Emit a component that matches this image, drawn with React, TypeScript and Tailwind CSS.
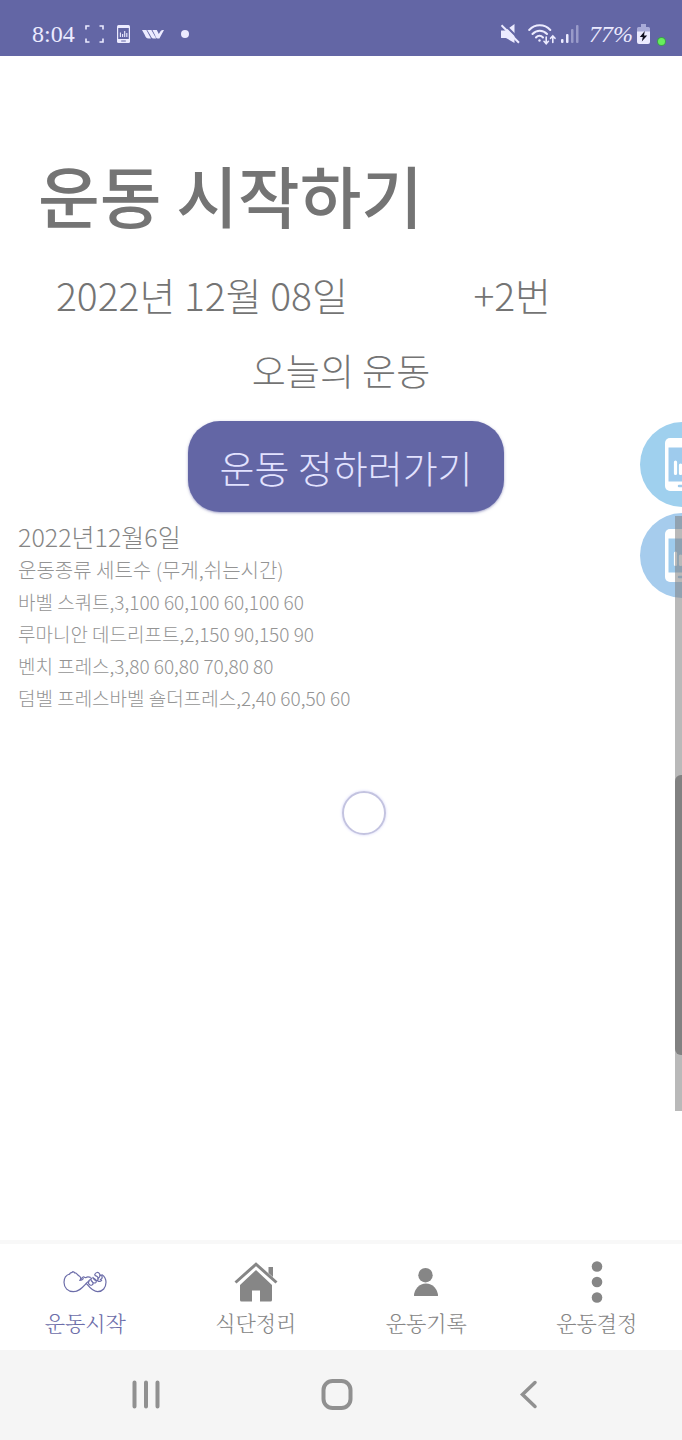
import type { ReactNode } from 'react';

const HAND = "font-['Noto_Sans_CJK_KR',sans-serif]";
const SERIF = "font-['Liberation_Serif','Noto_Serif_CJK_KR','Noto_Sans_CJK_KR',serif]";

function StatusBar() {
  return (
    <header className={`flex h-14 items-center justify-between bg-[#6366a5] pl-8 pr-[17px] pt-3 text-[#ecebff] ${SERIF}`}>
      <div className="flex items-center">
        <span className="text-2xl leading-8">8:04</span>
        <svg className="ml-2.5 h-[18px] w-[19px]" viewBox="0 0 19 18" fill="none" stroke="currentColor" strokeWidth="1.6" aria-hidden="true">
          <path d="M4.5 1H1v3.5M14.5 1H18v3.5M4.5 17H1v-3.5M14.5 17H18v-3.5" />
        </svg>
        <svg className="ml-[13px] h-[18px] w-[13px]" viewBox="0 0 13 18" aria-hidden="true">
          <rect width="13" height="18" rx="1.5" fill="currentColor" />
          <path d="M1.2 3h10.6v11H1.2z" fill="#6366a5" />
          <path d="M3.4 7.5V12M5.6 9V12M7.7 6V12M9.8 8V12" stroke="currentColor" strokeWidth="1.1" />
          <path d="M4.2 16h4.6" stroke="#6366a5" strokeWidth="1" />
        </svg>
        <svg className="ml-3 h-[9px] w-[22px]" viewBox="0 0 22 9" fill="currentColor" aria-hidden="true">
          <path d="M0 0h4.400l4.600 8.600H6.600C4.200 8.600 3.700 7 2.800 5zM5.200 0h4.200l4.800 8.600h-2.800c-1.600 0-2.200-1.600-3.200-3.600zM10.400 0h4.400l2 4 1.700-2.700C19.100.300 20 0 22 0l-4.600 8.600h-1.800c-1.400 0-1.800-1.600-2.600-3.600z" />
        </svg>
        <span className="ml-[17px] size-2 rounded-full bg-current" />
      </div>
      <div className="flex items-center">
        <svg className="size-5" viewBox="0 0 20 20" aria-hidden="true">
          <path d="M1 6.500h4.500L14.500 0v19L6 14H1z" fill="currentColor" />
          <path d="M3.500-.500 20.500 16.500" stroke="#6366a5" strokeWidth="2" />
          <path d="M1.500 1.200 19 18.800" stroke="currentColor" strokeWidth="2" />
        </svg>
        <svg className="ml-2 h-[21px] w-7" viewBox="0 0 28 21" fill="none" stroke="currentColor" strokeWidth="2" strokeLinecap="round" aria-hidden="true">
          <path d="M1.200 6C7-.300 16.500-.300 22.300 6M4.500 10c4-4.300 10.500-4.300 14.500 0M8 13.500c2-2.300 5-2.300 7 0" />
          <circle cx="11.500" cy="16.500" r="1.200" fill="currentColor" stroke="none" />
          <path d="M18.200 13v6.500m-2.200-2.200 2.200 2.400 2.200-2.400M24.800 18.500V12m-2.200 2.300 2.200-2.400 2.200 2.400" strokeWidth="1.600" />
        </svg>
        <svg className="ml-[5px] h-[18px] w-[18px]" viewBox="0 0 18 18" fill="currentColor" aria-hidden="true">
          <rect y="14" width="2.500" height="4" rx="1" />
          <rect x="5" y="9" width="2.500" height="9" rx="1" />
          <rect x="10" y="4" width="2.500" height="14" rx="1" opacity=".4" />
          <rect x="15" y="0" width="2.500" height="18" rx="1" opacity=".4" />
        </svg>
        <span className="ml-2.5 text-2xl leading-8 italic">77%</span>
        <svg className="ml-1 h-5 w-[13px]" viewBox="0 0 13 20" aria-hidden="true">
          <path d="M4 0h5v3h2.500q1.500 0 1.500 1.500V8H0V4.500Q0 3 1.500 3H4z" fill="#a9abd8" />
          <path d="M0 7.500h13V18q0 2-2 2H2q-2 0-2-2z" fill="currentColor" />
          <path d="M7.800 7 2.800 13h3L4.800 17.500l5.400-6H7z" fill="#111120" />
        </svg>
        <span className="mt-3.5 ml-2 size-[7px] rounded-full bg-[#67ee5d] ring-1 ring-[#3ba24b]" />
      </div>
    </header>
  );
}

const routine = [
  '바벨 스쿼트,3,100 60,100 60,100 60',
  '루마니안 데드리프트,2,150 90,150 90',
  '벤치 프레스,3,80 60,80 70,80 80',
  '덤벨 프레스바벨 숄더프레스,2,40 60,50 60',
];

function Bubble({ color, label }: { color: string; label: string }) {
  return (
    <button type="button" aria-label={label} className={`flex h-[85px] w-[85px] items-center justify-center rounded-full ${color}`}>
      <svg className="h-[53px] w-9" viewBox="0 0 36 53" aria-hidden="true">
        <rect width="36" height="53" rx="5" fill="white" />
        <path d="M3.500 9.500h29v34h-29z" fill="#9ecbed" />
        <path d="M10.500 24v11.500M15.500 27v8.500M20.500 21v14.500M25.500 25v10.500" stroke="white" strokeWidth="3.200" strokeLinecap="round" />
        <path d="M14 48h8" stroke="#9ecbed" strokeWidth="2.500" strokeLinecap="round" />
      </svg>
    </button>
  );
}

function ArmsIcon() {
  return (
    <svg className="h-[22px] w-11" viewBox="0 0 132 66" fill="none" stroke="currentColor" strokeWidth="3.600" strokeLinejoin="round" strokeLinecap="round" aria-hidden="true">
      <path d="M20 9C9 12 3 22 3 34c0 17 12 28 28 28 21 0 31-18 45-31 4-4 7-8 11-10" />
      <path d="M20 9c3-6 8-2 9-7 3 0 5 1 6 4 6-1 7 4 11 7 3 3 7 2 7 9 3 1 5-1 7-4 5-1 4 3 9 2 4-4 8-2 13-1" />
      <path d="M54 22c-3 3-1 5-4 6 4 0 8-1 11-5M70 37c10 12 18 25 34 25 15 0 25-12 25-28 0-10-4-18-12-23" />
      <path d="M78 31c-5 5 2 14 9 11 6-3 3-9-3-14M84 25c-1 8 10 14 15 9 3-5-2-10-8-13M90 19c0 8 11 13 15 7 3-6-2-10-8-12M95 12c2-9 11-10 15-3 3 6-1 11-6 13M110 13c8-3 11 9 2 13M104 29c4 3 9 2 12-1" />
    </svg>
  );
}

function HouseIcon() {
  return (
    <svg className="h-10 w-11" viewBox="0 0 44 40" aria-hidden="true">
      <path d="M34.500 5H39v10l-4.500-4z" fill="currentColor" />
      <path d="M1.500 20.500 22 2.200l20.500 18.300" fill="none" stroke="currentColor" strokeWidth="3" />
      <path d="M22 8 38 23v15q0 1.500-1.500 1.500H26v-11h-8v11H7.500Q6 39.500 6 38V23z" fill="currentColor" />
    </svg>
  );
}

function PersonIcon() {
  return (
    <svg className="h-7 w-6" viewBox="0 0 24 28" fill="currentColor" aria-hidden="true">
      <circle cx="11.500" cy="7.200" r="7.200" />
      <path d="M0 28a12 12.500 0 0 1 24 0z" />
    </svg>
  );
}

function DotsIcon() {
  return (
    <svg className="h-[42px] w-3" viewBox="0 0 12 42" fill="currentColor" aria-hidden="true">
      <circle cx="6" cy="5.500" r="5.300" />
      <circle cx="6" cy="21" r="5.300" />
      <circle cx="6" cy="36.500" r="5.300" />
    </svg>
  );
}

function Tab({ label, icon, active = false }: { label: string; icon: ReactNode; active?: boolean }) {
  return (
    <a href="#" aria-current={active ? 'page' : undefined} className={`flex flex-col items-center pt-4 ${active ? 'text-[#6c6da9]' : 'text-[#868686]'}`}>
      <span className="flex h-11 items-center">{icon}</span>
      <span className="mt-1 text-[21px] leading-8 font-light">{label}</span>
    </a>
  );
}

export default function App() {
  return (
    <div className="relative flex min-h-screen flex-col overflow-hidden bg-white">
      <StatusBar />
      <main className={`flex-1 pt-[90px] font-light text-[#747474] ${HAND}`}>
        <h1 className="pl-[38px] text-[67px] leading-[96px] font-medium">운동 시작하기</h1>
        <div className="mt-6 flex justify-between pr-[131px] pl-14 text-[39px] leading-14">
          <p>2022년 12월 08일</p>
          <p>+2번</p>
        </div>
        <h2 className="mt-5 text-center text-[37px] leading-14">오늘의 운동</h2>
        <div className="mt-[23px] flex justify-center pl-2.5">
          <button type="button" className="rounded-[32px] bg-[#6366a5] px-[31px] py-[18px] text-[38px] leading-[55px] text-[#e2e2ff] shadow-sm shadow-[#6366a5]/50">
            운동 정하러가기
          </button>
        </div>
        <section className="mt-1.5 pl-[18px] text-[#949494]">
          <h3 className="text-[25px] leading-9 text-[#858585]">2022년12월6일</h3>
          <p className="text-xl leading-8">운동종류 세트수 (무게,쉬는시간)</p>
          <ul className="text-[19px] leading-8">
            {routine.map((row) => (
              <li key={row}>{row}</li>
            ))}
          </ul>
        </section>
      </main>

      <nav className={`grid h-[110px] grid-cols-4 border-t-4 border-[#f8f8f8] bg-white ${SERIF}`}>
        <Tab active label="운동시작" icon={<ArmsIcon />} />
        <Tab label="식단정리" icon={<HouseIcon />} />
        <Tab label="운동기록" icon={<PersonIcon />} />
        <Tab label="운동결정" icon={<DotsIcon />} />
      </nav>

      <footer className="grid h-[90px] grid-cols-3 items-center justify-items-center bg-[#f5f5f5] pr-[57px] pl-[50px] text-[#909090]">
        <button type="button" aria-label="Recent apps">
          <svg className="size-8" viewBox="0 0 32 32" stroke="currentColor" strokeWidth="4" strokeLinecap="round">
            <path d="M4.500 3.500v24M16 3.500v24M27.500 3.500v24" />
          </svg>
        </button>
        <button type="button" aria-label="Home">
          <svg className="size-8" viewBox="0 0 32 32" fill="none" stroke="currentColor" strokeWidth="4">
            <rect x="2.500" y="2" width="27" height="27" rx="9" />
          </svg>
        </button>
        <button type="button" aria-label="Back">
          <svg className="size-8" viewBox="0 0 32 32" fill="none" stroke="currentColor" strokeWidth="3.500" strokeLinecap="round">
            <path d="M22 3.500 9.500 15.500 22 27.500" />
          </svg>
        </button>
      </footer>

      <div className="absolute top-[422px] -right-[43px] flex flex-col gap-1.5">
        <Bubble color="bg-[#9fd0ee]" label="Capture" />
        <Bubble color="bg-[#a6cced]" label="Record" />
      </div>
      <div className="absolute top-[516px] right-0 h-[595px] w-[7px] bg-[#808080]/55">
        <div className="mt-[259px] h-[280px] rounded-l-md bg-[#818181]" />
      </div>
      <div className="absolute top-[791px] left-[342px] size-11 rounded-full border-2 border-[#c3c3e0] shadow-[0_0_3px_#d5d5fa]" />
    </div>
  );
}
